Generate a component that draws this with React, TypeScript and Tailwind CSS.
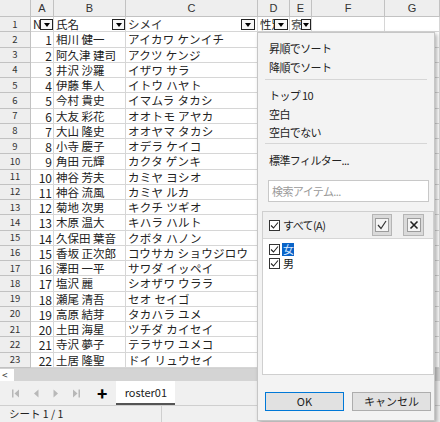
import React from "react";

const ROWS: [string, string][] = [
  ["相川 健一", "アイカワ ケンイチ"],
  ["阿久津 建司", "アクツ ケンジ"],
  ["井沢 沙羅", "イザワ サラ"],
  ["伊藤 隼人", "イトウ ハヤト"],
  ["今村 貴史", "イマムラ タカシ"],
  ["大友 彩花", "オオトモ アヤカ"],
  ["大山 隆史", "オオヤマ タカシ"],
  ["小寺 慶子", "オデラ ケイコ"],
  ["角田 元輝", "カクタ ゲンキ"],
  ["神谷 芳夫", "カミヤ ヨシオ"],
  ["神谷 流風", "カミヤ ルカ"],
  ["菊地 次男", "キクチ ツギオ"],
  ["木原 温大", "キハラ ハルト"],
  ["久保田 葉音", "クボタ ハノン"],
  ["香坂 正次郎", "コウサカ ショウジロウ"],
  ["澤田 一平", "サワダ イッペイ"],
  ["塩沢 麗", "シオザワ ウララ"],
  ["瀬尾 清吾", "セオ セイゴ"],
  ["高原 結芽", "タカハラ ユメ"],
  ["土田 海星", "ツチダ カイセイ"],
  ["寺沢 夢子", "テラサワ ユメコ"],
  ["土居 隆聖", "ドイ リュウセイ"],
];

const LETTERS = ["A", "B", "C", "D", "E", "F", "G"];

function DropBtn({ narrow = false }: { narrow?: boolean }) {
  return (
    <span
      className={`absolute right-0 top-[2px] h-[11px] ${narrow ? "w-[10px]" : "w-[13px]"} border border-[#222] bg-[#f7f7f7] flex items-center justify-center`}
    >
      <span className="block w-0 h-0 border-x-[3.5px] border-t-[4px] border-x-transparent border-t-black" />
    </span>
  );
}

function Check({ checked = true }: { checked?: boolean }) {
  return (
    <span className="w-[11px] h-[11px] border border-[#333] bg-white flex items-center justify-center shrink-0">
      {checked && (
        <svg width="9" height="9" viewBox="0 0 9 9">
          <path d="M1 4.5 L3.5 7 L8 1.5" fill="none" stroke="#222" strokeWidth="1.1" />
        </svg>
      )}
    </span>
  );
}

function NavArrow({ dir, bar }: { dir: "l" | "r"; bar?: boolean }) {
  return (
    <svg width="8" height="9" viewBox="0 0 8 9">
      {dir === "l" ? (
        <>
          {bar && <rect x="0" y="0.5" width="1.5" height="8" fill="#b8b8b8" />}
          <path d={bar ? "M7 0.5 L2.5 4.5 L7 8.5 Z" : "M6.5 0.5 L2 4.5 L6.5 8.5 Z"} fill="#b8b8b8" />
        </>
      ) : (
        <>
          <path d={bar ? "M1 0.5 L5.5 4.5 L1 8.5 Z" : "M1.5 0.5 L6 4.5 L1.5 8.5 Z"} fill="#b8b8b8" />
          {bar && <rect x="6.5" y="0.5" width="1.5" height="8" fill="#b8b8b8" />}
        </>
      )}
    </svg>
  );
}

export default function App() {
  const cell = "border-r border-b border-[#d6d6d6] relative whitespace-nowrap";
  const head = "border-r border-b border-[#c2c2c2] bg-[#eeeeee] text-[#333]";

  return (
    <div className="relative w-[440px] h-[422px] overflow-hidden bg-white font-['Noto_Sans_CJK_JP','Noto_Sans',sans-serif] text-[#222]">
      {/* ── Sheet grid ── */}
      <div className="grid grid-cols-[31px_23px_72px_132px_32px_22px_73px_1fr] grid-rows-[17px_repeat(23,15.25px)] text-[11.5px] leading-[15px]">
        <div className={head} />
        {LETTERS.map((l) => (
          <div key={l} className={`${head} flex items-center justify-center text-[11px] font-['Liberation_Sans',sans-serif]`}>
            {l}
          </div>
        ))}

        {/* row 1 */}
        <div className={`${head} flex items-center justify-center text-[9.5px]`}>1</div>
        <div className={`${cell} overflow-hidden pl-[2px]`}>
          No
          <DropBtn />
        </div>
        <div className={`${cell} pl-[2px]`}>
          氏名
          <DropBtn />
        </div>
        <div className={`${cell} pl-[2px] text-[#333]`}>
          シメイ
          <span className="absolute right-[2px] top-[2px] h-[11px] w-[14px] border border-[#222] bg-[#f7f7f7] flex items-center justify-center">
            <span className="block w-0 h-0 border-x-[3.5px] border-t-[4px] border-x-transparent border-t-black" />
          </span>
        </div>
        <div className={`${cell} overflow-hidden pl-[2px]`}>
          性別
          <span className="absolute right-[1px] top-[2px] h-[11px] w-[14px] border border-[#222] bg-[#f7f7f7] flex items-center justify-center">
            <span className="block w-0 h-0 border-x-[3.5px] border-t-[4px] border-x-transparent border-t-black" />
          </span>
        </div>
        <div className={`${cell} overflow-hidden pl-[1px] text-[#555]`}>
          寮
          <DropBtn narrow />
        </div>
        <div className={cell} />
        <div className={cell} />

        {ROWS.map(([name, kana], i) => (
          <React.Fragment key={i}>
            <div className={`${head} flex items-center justify-center text-[9.5px]`}>{i + 2}</div>
            <div className={`${cell} text-right pr-[1px] text-[12px]`}>{i + 1}</div>
            <div className={`${cell} pl-[2px] overflow-hidden`}>{name}</div>
            <div className={`${cell} pl-[2px] tracking-[0.3px]`}>{kana}</div>
            <div className={cell} />
            <div className={cell} />
            <div className={cell} />
            <div className={cell} />
          </React.Fragment>
        ))}
      </div>

      {/* ── Horizontal scrollbar ── */}
      <div className="flex h-[13px] border-t border-[#d0d0d0]">
        <div className="w-[14px] flex items-center pl-[2px] text-[10px] leading-none text-[#333] bg-white">&lt;</div>
        <div className="flex-1 bg-[#d4d4d4]" />
      </div>

      {/* ── Sheet tabs ── */}
      <div className="flex items-center h-[24px] bg-[#f0f0f0]">
        <div className="flex items-center gap-[12px] pl-[12px] pt-[2px]">
          <NavArrow dir="l" bar />
          <NavArrow dir="l" />
          <NavArrow dir="r" />
          <NavArrow dir="r" bar />
        </div>
        <span className="ml-[17px] text-[17px] font-black leading-none text-black">+</span>
        <div className="ml-[9px] self-stretch w-[59px] bg-white border-b-2 border-[#555] flex items-center justify-center text-[11px] text-[#222]">
          roster01
        </div>
      </div>

      {/* ── Status bar ── */}
      <div className="flex items-center h-[17px] bg-[#f0f0f0] border-t border-[#cfcfcf] text-[10.5px]">
        <span className="pl-[9px] w-[162px] border-r border-[#cfcfcf] h-full flex items-center">シート 1 / 1</span>
      </div>

      {/* ── Autofilter popup ── */}
      <div className="absolute left-[257px] top-[32px] w-[178px] h-[389px] bg-[#f3f3f3] border border-[#c6c6c6] shadow-[2px_2px_4px_rgba(0,0,0,0.3)] text-[11px] text-[#222] tracking-[-0.6px]">
        <div className="pt-[6px] px-[11px]">
          <div className="h-[19px] flex items-center">昇順でソート</div>
          <div className="h-[19px] flex items-center">降順でソート</div>
        </div>
        <div className="mx-[7px] mt-[2px] border-t border-[#d6d6d6]" />
        <div className="pt-[6px] px-[11px]">
          <div className="h-[19px] flex items-center">トップ 10</div>
          <div className="h-[18px] flex items-center">空白</div>
          <div className="h-[18px] flex items-center">空白でない</div>
        </div>
        <div className="mx-[7px] mt-[2px] border-t border-[#d6d6d6]" />
        <div className="pt-[7px] px-[11px]">
          <div className="h-[19px] flex items-center">標準フィルター...</div>
        </div>

        <div className="mt-[10px] ml-[10px] w-[161px] h-[22px] bg-white border border-[#c8c8c8] flex items-center pl-[3px] text-[#9a9a9a]">
          検索アイテム...
        </div>

        <div className="mt-[9px] ml-[4px] w-[172px] h-[164px] border border-[#cfcfcf] flex flex-col">
          <div className="h-[27px] bg-[#f0f0f0] border-b border-[#d6d6d6] flex items-center pl-[6px] pr-[9px]">
            <Check />
            <span className="ml-[3px] flex-1">すべて(A)</span>
            <span className="w-[20px] h-[22px] bg-[#dadada] border border-[#b5b5b5] flex items-center justify-center">
              <svg width="14" height="14" viewBox="0 0 14 14">
                <rect x="0.5" y="0.5" width="13" height="13" fill="#f4f4f4" stroke="#9c9c9c" />
                <path d="M3 7 L6 10.5 L11 3" fill="none" stroke="#333" strokeWidth="1.2" />
              </svg>
            </span>
            <span className="ml-[11px] w-[21px] h-[22px] bg-[#dadada] border border-[#b5b5b5] flex items-center justify-center">
              <svg width="14" height="14" viewBox="0 0 14 14">
                <rect x="0.5" y="0.5" width="13" height="13" fill="#f4f4f4" stroke="#9c9c9c" />
                <path d="M3.5 3.5 L10.5 10.5 M10.5 3.5 L3.5 10.5" fill="none" stroke="#222" strokeWidth="1.6" />
              </svg>
            </span>
          </div>
          <div className="flex-1 bg-white pt-[4px] pl-[6px]">
            <div className="flex items-center h-[13px]">
              <Check />
              <span className="ml-[2px] px-[1px] bg-[#0a64c8] text-[#dbe9ff] leading-[13px]">女</span>
            </div>
            <div className="flex items-center h-[13px] mt-[1px]">
              <Check />
              <span className="ml-[3px] leading-[13px]">男</span>
            </div>
          </div>
        </div>

        <div className="mt-[17px] ml-[7px] flex gap-[8px] tracking-normal">
          <button
            type="button"
            className="w-[79px] h-[19px] bg-[#e1e1e1] border border-[#0078d7] flex items-center justify-center text-[11px]"
          >
            OK
          </button>
          <button
            type="button"
            className="w-[79px] h-[19px] bg-[#e1e1e1] border border-[#adadad] flex items-center justify-center text-[11px]"
          >
            キャンセル
          </button>
        </div>
      </div>
    </div>
  );
}
